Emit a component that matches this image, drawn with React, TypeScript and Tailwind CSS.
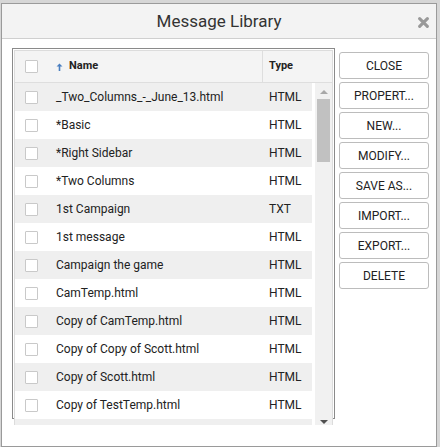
import { useState } from "react";

const messages = [
  { name: "_Two_Columns_-_June_13.html", type: "HTML" },
  { name: "*Basic", type: "HTML" },
  { name: "*Right Sidebar", type: "HTML" },
  { name: "*Two Columns", type: "HTML" },
  { name: "1st Campaign", type: "TXT" },
  { name: "1st message", type: "HTML" },
  { name: "Campaign the game", type: "HTML" },
  { name: "CamTemp.html", type: "HTML" },
  { name: "Copy of CamTemp.html", type: "HTML" },
  { name: "Copy of Copy of Scott.html", type: "HTML" },
  { name: "Copy of Scott.html", type: "HTML" },
  { name: "Copy of TestTemp.html", type: "HTML" },
];

const actions = ["CLOSE", "PROPERT...", "NEW...", "MODIFY...", "SAVE AS...", "IMPORT...", "EXPORT...", "DELETE"];

const Box = ({ checked, onClick }: { checked: boolean; onClick: () => void }) => (
  <button
    onClick={onClick}
    className="w-[13px] h-[13px] border border-[#c9c9c9] bg-white rounded-[1px] flex items-center justify-center"
  >
    {checked && <span className="w-[7px] h-[7px] bg-[#4a7fc0]" />}
  </button>
);

export default function App() {
  const [selected, setSelected] = useState<number[]>([]);
  const [all, setAll] = useState(false);

  const toggle = (i: number) => {
    setSelected((s) => (s.includes(i) ? s.filter((x) => x !== i) : [...s, i]));
  };

  return (
    <div
      className="w-[440px] h-[447px] bg-[#d6d6d6] pt-[3px] pl-[1px] overflow-hidden"
      style={{ fontFamily: "Roboto, 'Liberation Sans', sans-serif" }}
    >
      <div className="w-[436px] h-[444px] bg-white border border-[#9a9a9a] flex flex-col">
        {/* title bar */}
        <div className="h-[35px] shrink-0 bg-[#f3f3f3] border-b border-[#cfcfcf] relative flex items-center justify-center">
          <span className="text-[17px] text-[#333] leading-none">Message Library</span>
          <button className="absolute right-[7px] top-[13px] w-[11px] h-[11px]">
            <svg viewBox="0 0 10 10" width="11" height="11">
              <path d="M1.5 1.5 L8.5 8.5 M8.5 1.5 L1.5 8.5" stroke="#999" strokeWidth="2.8" strokeLinecap="round" />
            </svg>
          </button>
        </div>

        <div className="flex pl-[10px] pt-[9px] gap-[4px]">
          {/* table */}
          <div className="w-[323px] h-[371px] border border-[#8a8a8a] p-px shrink-0">
            <div className="h-[375px] border border-[#dcdcdc] border-b-0 flex flex-col overflow-hidden">
              <div className="h-[32px] shrink-0 bg-[#f4f4f4] border-b border-[#dedede] flex items-center text-[11px] font-bold text-[#222]">
                <div className="w-[35px] pl-[10px] flex items-center">
                  <Box checked={all} onClick={() => setAll(!all)} />
                </div>
                <div className="w-[212px] pl-[6px] flex items-center gap-[6px] h-full">
                  <svg width="7" height="8" viewBox="0 0 7 8">
                    <path d="M3.5 0.5 L6.5 3.5 H4.3 V8 H2.7 V3.5 H0.5 Z" fill="#4a7fc0" />
                  </svg>
                  <span>Name</span>
                </div>
                <div className="h-full flex-1 border-l border-[#dedede] pl-[6px] flex items-center">
                  Type
                </div>
              </div>
              <div className="flex flex-1 min-h-0">
                <div className="w-[299px] overflow-hidden">
                  {messages.map((m, i) => (
                    <div
                      key={m.name}
                      className={`h-[28px] flex items-center text-[12px] text-[#222] ${
                        i % 2 === 0 ? "bg-[#efefef]" : "bg-white"
                      }`}
                    >
                      <div className="w-[35px] pl-[10px] flex items-center">
                        <Box checked={all || selected.includes(i)} onClick={() => toggle(i)} />
                      </div>
                      <div className="w-[219px] pl-[6px] truncate">{m.name}</div>
                      <div className="flex-1">{m.type}</div>
                    </div>
                  ))}
                  <div className="h-[28px] bg-[#efefef]" />
                </div>
                <div className="w-[3px] bg-white" />
                <div className="w-[17px] bg-[#f1f1f1] flex flex-col items-center pt-[7px]">
                  <svg width="8" height="4" viewBox="0 0 8 4">
                    <path d="M0 4 L4 0 L8 4 Z" fill="#a8a8a8" />
                  </svg>
                  <div className="w-[13px] h-[63px] bg-[#c1c1c1] mt-[5px]" />
                  <div className="flex-1" />
                  <svg width="8" height="4" viewBox="0 0 8 4" className="mb-[1px]">
                    <path d="M0 0 L4 4 L8 0 Z" fill="#505050" />
                  </svg>
                </div>
              </div>
            </div>
          </div>

          {/* actions */}
          <div className="flex flex-col gap-[3px] pt-[4px]">
            {actions.map((a) => (
              <button
                key={a}
                className="w-[90px] h-[27px] border border-[#bcbcbc] rounded-[3px] bg-white text-[12px] text-[#222] flex items-center justify-center"
              >
                {a}
              </button>
            ))}
          </div>
        </div>
      </div>
    </div>
  );
}
